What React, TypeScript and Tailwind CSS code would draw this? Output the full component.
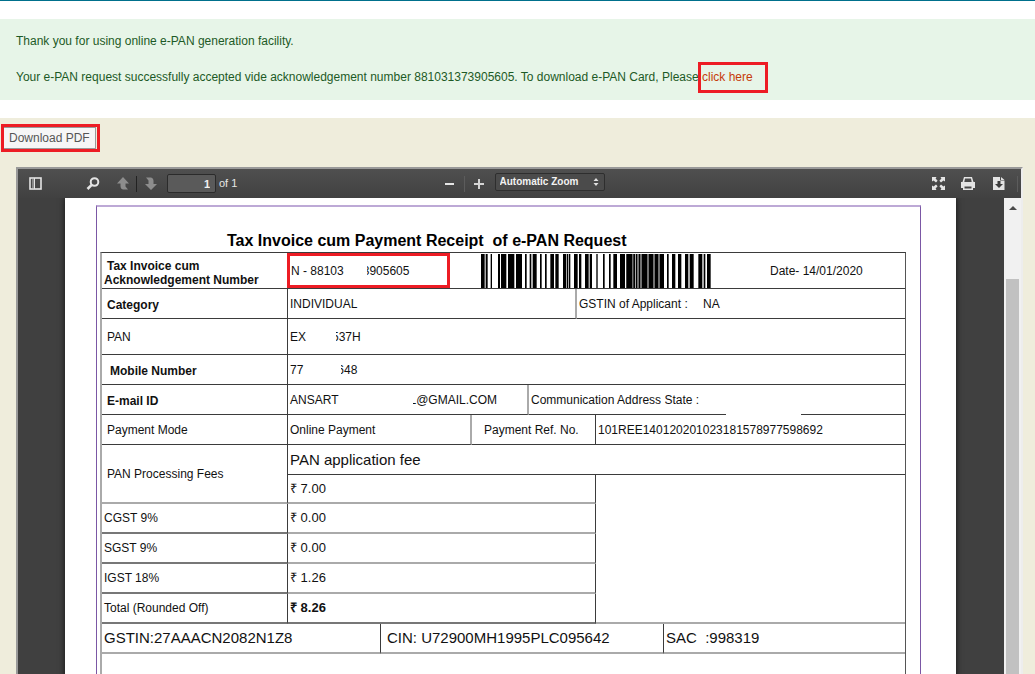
import type { ReactNode } from "react";

// [x, width] of every bar
const BARS: [number, number][] = [
  [0, 11],
  [14, 6],
  [29, 4],
  [51, 6],
  [60, 16],
  [81, 19],
  [105, 18],
  [132, 5],
  [146, 5],
  [155, 12],
  [177, 5],
  [192, 5],
  [208, 11],
  [223, 10],
  [246, 9],
  [257, 4],
  [263, 5],
  [279, 11],
  [294, 7],
  [312, 11],
  [326, 7],
  [346, 4],
  [366, 5],
  [384, 5],
  [397, 11],
  [417, 15],
  [436, 18],
  [457, 5],
  [465, 4],
  [473, 5],
  [482, 17],
  [503, 14],
  [521, 11],
  [536, 13],
  [558, 5],
  [573, 10],
  [591, 10],
  [612, 10],
  [626, 12],
  [652, 12],
  [668, 5],
  [678, 11],
];

const TAXES = [
  { label: "CGST 9%", amount: "₹ 0.00" },
  { label: "SGST 9%", amount: "₹ 0.00" },
  { label: "IGST 18%", amount: "₹ 1.26" },
];

function ToolButton({
  label,
  className = "w-[26px]",
  children,
}: {
  label: string;
  className?: string;
  children: ReactNode;
}) {
  return (
    <button
      type="button"
      aria-label={label}
      className={`flex h-7 items-center justify-center ${className}`}
    >
      {children}
    </button>
  );
}

function Separator({ className = "bg-[#5c5c5c]" }: { className?: string }) {
  return <span className={`h-4 w-px ${className}`} />;
}

// Text whose first character is partly hidden by the redaction
function Redacted({ children }: { children: ReactNode }) {
  return (
    <span className="relative">
      {children}
      <span className="absolute inset-y-0 left-0 w-1 bg-white" />
    </span>
  );
}

function Barcode() {
  return (
    <svg viewBox="0 0 690 102" width="230" height="34" role="img" aria-label="Barcode">
      <path d="M436 0h113v102H436z" fill="#aaa" />
      {BARS.map(([x, width]) => (
        <rect key={x} x={x} y="0" width={width} height="102" fill="#000" />
      ))}
    </svg>
  );
}

function Toolbar() {
  return (
    <div className="grid h-[29px] shrink-0 grid-cols-[1fr_auto_1fr] items-center bg-linear-to-b from-[#4f4f4f] to-[#414141] text-[11px] text-[#e6e6e6]">
      <div className="flex items-center pl-1">
        <ToolButton label="Toggle sidebar">
          <svg width="13" height="13" viewBox="0 0 13 13" fill="none">
            <path d="M3 2h2v9H3z" fill="#8a8a8a" />
            <rect x="1" y="1" width="11" height="11" stroke="#e4e4e4" strokeWidth="1.6" />
            <path d="M5.500 1v11" stroke="#e4e4e4" />
          </svg>
        </ToolButton>
        <span className="w-8" />
        <ToolButton label="Find">
          <svg width="14" height="14" viewBox="0 0 14 14" fill="none" stroke="#e4e4e4">
            <circle cx="8.5" cy="5" r="3.8" strokeWidth="2" />
            <path d="M5.7 7.8 1.5 12" strokeWidth="2.6" />
          </svg>
        </ToolButton>
        <span className="w-1" />
        <ToolButton label="Previous page">
          <svg width="12" height="13" viewBox="0 0 12 13" fill="#8d8d8d">
            <path d="M6 0l6 6.500H8.500V9.500L11 12.500H6Q3.500 12 3.500 9V6.500H0z" />
          </svg>
        </ToolButton>
        <Separator className="bg-[#222]" />
        <ToolButton label="Next page" className="w-7">
          <svg width="12" height="13" viewBox="0 0 12 13" fill="#8d8d8d">
            <path d="M6 13L0 7h3.5V3.5L1 .5h5Q8.500 1 8.500 4v3H12z" />
          </svg>
        </ToolButton>
        <input
          type="text"
          aria-label="Page"
          defaultValue="1"
          className="ml-0.5 h-[19px] w-[49px] rounded-xs border border-[#2b2b2b] bg-[#5a5a5a] px-[5px] text-right font-bold text-[#f2f2f2]"
        />
        <span className="ml-[3px]">of 1</span>
      </div>
      <div className="flex items-center">
        <ToolButton label="Zoom out" className="w-[29px]">
          <svg width="9" height="2" viewBox="0 0 9 2">
            <path d="M0 0h9v2H0z" fill="#e4e4e4" />
          </svg>
        </ToolButton>
        <Separator />
        <ToolButton label="Zoom in" className="w-[28px]">
          <svg width="10" height="10" viewBox="0 0 10 10">
            <path d="M4 0h2v4h4v2H6v4H4V6H0V4h4z" fill="#d4d4d4" />
          </svg>
        </ToolButton>
        <div className="relative -mt-1 ml-0.5">
          <select
            aria-label="Zoom"
            className="block h-[18px] w-[110px] appearance-none rounded-xs border border-[#2e2e2e] bg-[#4b4b4b] pl-1 text-[10px] font-bold text-[#f2f2f2]"
          >
            <option>Automatic Zoom</option>
          </select>
          <svg
            className="pointer-events-none absolute top-[5px] right-[6px]"
            width="6"
            height="8"
            viewBox="0 0 6 8"
            fill="#e0e0e0"
          >
            <path d="M3 0l2.500 3h-5zM3 8L.5 5h5z" />
          </svg>
        </div>
      </div>
      <div className="flex items-center justify-end pr-[3px]">
        <ToolButton label="Presentation mode" className="w-[30px]">
          <svg width="13" height="13" viewBox="0 0 13 13" fill="#e4e4e4">
            <path d="M0 0h4.500L3.600 1.500 5.600 3.800 4 5.400 1.600 3.400 0 4.500z" />
            <path d="M13 0H8.500L9.400 1.500 7.400 3.800 9 5.400 11.400 3.400 13 4.500z" />
            <path d="M0 13h4.500L3.600 11.500 5.600 9.200 4 7.600 1.600 9.600 0 8.500z" />
            <path d="M13 13H8.500L9.400 11.500 7.400 9.200 9 7.600 11.400 9.600 13 8.500z" />
          </svg>
        </ToolButton>
        <ToolButton label="Print" className="w-[30px]">
          <svg width="14" height="13" viewBox="0 0 14 13" fill="#e4e4e4">
            <path d="M3 0h8l1.500 5H14v6h-2v2H2v-2H0V5h1.500zM4 1.500L3.300 5h7.400L10 1.500zM3.500 9.500v2h7v-2z" fillRule="evenodd" />
          </svg>
        </ToolButton>
        <ToolButton label="Download" className="w-[31px]">
          <svg width="12" height="13" viewBox="0 0 12 13">
            <path d="M0 0h7v3.500h4.500V13H0zM8 0l3.500 3H8z" fill="#e4e4e4" />
            <path d="M4.500 4h3v3H10l-4 4-4-4h2.500z" fill="#3c3c3c" />
          </svg>
        </ToolButton>
        <span className="w-[3px]" />
        <Separator />
      </div>
    </div>
  );
}

function Receipt() {
  return (
    <table className="w-full table-fixed border-separate border-spacing-0 border-t border-r border-l-2 border-t-[#3b3b3b] border-r-[#555] border-l-[#aaa] text-left text-xs text-[#111] [&_td]:border-[#3b3b3b] [&_td]:px-0.5 [&_td]:py-0 [&_th]:border-r [&_th]:border-b [&_th]:border-[#3b3b3b] [&_th]:py-0 [&_th]:pr-0">
      <colgroup>
        <col className="w-[186px]" />
        <col className="w-[93px]" />
        <col className="w-[91px]" />
        <col className="w-[57px]" />
        <col className="w-[48px]" />
        <col className="w-[19px]" />
        <col className="w-[68px]" />
        <col />
      </colgroup>
      <tbody>
        <tr className="h-9">
          <th scope="row" className="pt-[5px]! pl-0.5 leading-[14px]">
            <span className="pl-[3px]">Tax Invoice cum</span>
            <br />
            Acknowledgement Number
          </th>
          <td colSpan={7} className="relative border-b pl-[3px]!">
            <div className="grid grid-cols-[190px_289px_1fr] items-center">
              <span className="flex gap-[19px]">
                <span>N - 88103</span>
                <Redacted>3905605</Redacted>
              </span>
              <Barcode />
              <span>Date- 14/01/2020</span>
            </div>
            <span className="absolute top-0 -left-px h-[35px] w-[163px] border-3 border-[#ed1c24]" />
          </td>
        </tr>
        <tr className="h-[30px]">
          <th scope="row" className="pt-[3px]! pl-[5px]">Category</th>
          <td colSpan={4} className="border-r-2 border-b border-r-[#aaa]!">INDIVIDUAL</td>
          <td colSpan={3} className="border-b">
            GSTIN of Applicant : <span className="pl-3">NA</span>
          </td>
        </tr>
        <tr className="h-9">
          <th scope="row" className="pl-[5px] font-normal">PAN</th>
          <td colSpan={7} className="border-b">
            <span className="flex gap-[26px]">
              <span>EX</span>
              <Redacted>537H</Redacted>
            </span>
          </td>
        </tr>
        <tr className="h-[30px]">
          <th scope="row" className="pt-[3px]! pl-2">Mobile Number</th>
          <td colSpan={7} className="border-b">
            <span className="flex gap-[34px]">
              <span>77</span>
              <Redacted>648</Redacted>
            </span>
          </td>
        </tr>
        <tr className="h-[30px]">
          <th scope="row" className="pt-[3px]! pl-[5px]">E-mail ID</th>
          <td colSpan={3} className="border-r-2 border-b border-r-[#aaa]!">
            <span className="flex gap-[71px]">
              <span>ANSART</span>
              <Redacted>L@GMAIL.COM</Redacted>
            </span>
          </td>
          <td colSpan={4} className="relative border-b">
            Communication Address State :
            <span className="absolute -bottom-px left-[197px] h-px w-[75px] bg-white" />
          </td>
        </tr>
        <tr className="h-[30px]">
          <th scope="row" className="pl-[5px] font-normal">Payment Mode</th>
          <td colSpan={2} className="border-r-2 border-b border-r-[#aaa]!">Online Payment</td>
          <td colSpan={3} className="border-r border-b pl-3!">Payment Ref. No.</td>
          <td colSpan={2} className="border-b">101REE140120201023181578977598692</td>
        </tr>
        <tr className="h-[30px]">
          <th scope="row" rowSpan={2} className="border-b-2! border-b-[#aaa]! pl-[5px] font-normal">
            PAN Processing Fees
          </th>
          <td colSpan={7} className="border-b text-[15px]">PAN application fee</td>
        </tr>
        <tr className="h-[29px]">
          <td colSpan={5} className="border-r border-b-2 border-b-[#aaa]! text-[13px]">₹ 7.00</td>
          <td colSpan={2} rowSpan={5} className="border-b-2 border-b-[#aaa]!" />
        </tr>
        {TAXES.map((tax) => (
          <tr key={tax.label} className="h-[30px]">
            <th scope="row" className="border-b-2! border-b-[#777]! pl-0.5 font-normal">{tax.label}</th>
            <td colSpan={5} className="border-r border-b-2 border-b-[#aaa]! text-[13px]">{tax.amount}</td>
          </tr>
        ))}
        <tr className="h-[30px]">
          <th scope="row" className="border-b-2! border-b-[#777]! pl-0.5 font-normal">Total (Rounded Off)</th>
          <td colSpan={5} className="border-r border-b-2 border-b-[#777]! text-[13px] font-bold">₹ 8.26</td>
        </tr>
        <tr className="h-[30px] text-[15px]">
          <td colSpan={2} className="border-r border-b-2 border-b-[#aaa]!">GSTIN:27AAACN2082N1Z8</td>
          <td colSpan={5} className="border-r border-b-2 border-b-[#aaa]! pl-1.5!">CIN: U72900MH1995PLC095642</td>
          <td className="border-b-2 border-b-[#aaa]! whitespace-pre">SAC  :998319</td>
        </tr>
        <tr className="h-40">
          <td colSpan={8} />
        </tr>
      </tbody>
    </table>
  );
}

export default function App() {
  return (
    <div className="flex h-screen flex-col overflow-hidden bg-white font-['Liberation_Sans',Arial,sans-serif] text-xs">
      <header className="h-px shrink-0 bg-[#00708c]" />

      {/* Confirmation */}
      <section className="mt-[18px] shrink-0 space-y-[18px] bg-[#e7f5e8] pt-[13px] pb-[14px] pl-4 leading-[18px] text-[#1d5a26]">
        <p>Thank you for using online e-PAN generation facility.</p>
        <p>
          Your e-PAN request successfully accepted vide acknowledgement number 881031373905605. To
          download e-PAN Card, Please{" "}
          <a href="#download" className="relative inline-block text-[#c63a09]">
            click here
            <span className="absolute -top-[6px] -right-[15px] -left-1 h-[31px] border-3 border-[#ed1c24]" />
          </a>
        </p>
      </section>

      <main className="mt-[18px] flex min-h-0 flex-1 flex-col bg-[#efeddc]">
        {/* Download */}
        <div className="px-px pt-1.5">
          <div className="inline-block border-3 border-[#ed1c24] pr-px align-top">
            <button
              id="download"
              type="button"
              className="block h-[22px] border border-l-0 border-[#999] bg-[#f6f6f6] px-[5px] text-[#555]"
            >
              Download PDF
            </button>
          </div>
        </div>

        {/* PDF viewer */}
        <div className="mt-[15px] mr-3 ml-4 flex min-h-0 flex-1 flex-col border-2 border-b-0 border-t-[#999] border-r-[#ededed] border-l-[#999]">
          <Toolbar />
          <div className="flex min-h-0 flex-1">
            <div className="min-w-0 flex-1 overflow-hidden bg-[#404040] pr-12 pl-[47px]">
              <div className="bg-white pt-[7px] pr-[35px] pl-[31px] shadow-[0_0_6px_#111]">
                <div className="border-x border-t-2 border-x-[#7b57a5] border-t-[#bda9d6] pr-[14px] pl-[3px]">
                  <h1 className="pt-[23px] pl-[127px] text-base leading-[22px] font-bold whitespace-pre text-black">
                    Tax Invoice cum Payment Receipt  of e-PAN Request
                  </h1>
                  <Receipt />
                </div>
              </div>
            </div>
            {/* Scrollbar */}
            <div className="flex w-[17px] shrink-0 flex-col items-center bg-[#f1f1f1]">
              <svg className="mt-2 shrink-0" width="8" height="4" viewBox="0 0 8 4">
                <path d="M4 0l4 4H0z" fill="#4a4a4a" />
              </svg>
              <div className="mt-[69px] w-[13px] flex-1 bg-[#c1c1c1]" />
            </div>
          </div>
        </div>
      </main>
    </div>
  );
}
